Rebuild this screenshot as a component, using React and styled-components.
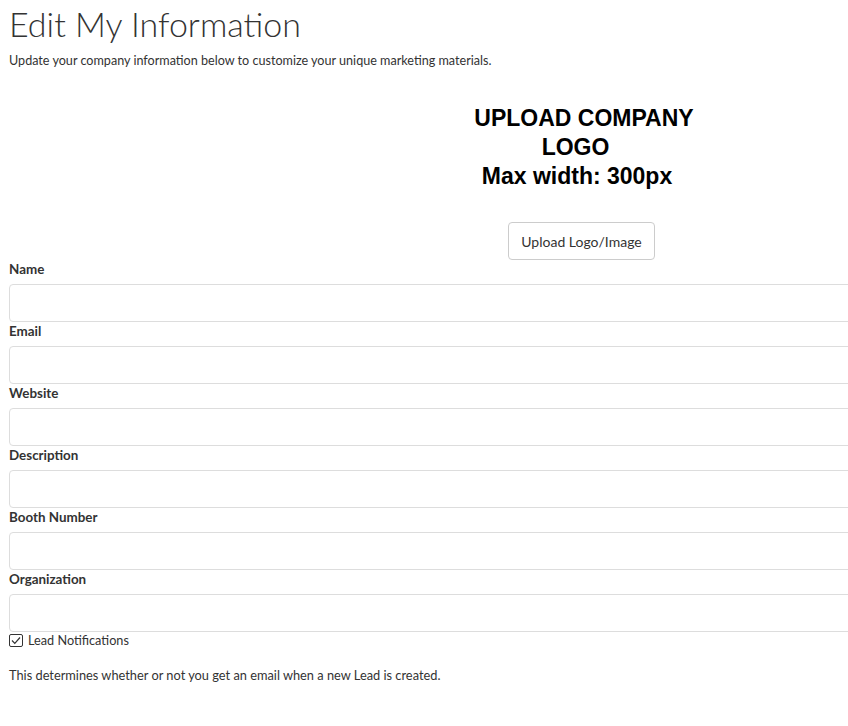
import React from 'react';
import styled, { createGlobalStyle } from 'styled-components';

const GlobalStyle = createGlobalStyle`
  html, body {
    margin: 0;
    padding: 0;
    background: #fff;
    overflow-x: hidden;
  }
  body {
    font-family: Lato, "Open Sans", sans-serif;
    color: #333;
  }
`;

const Page = styled.div`
  width: 900px;
  padding: 0 0 40px 9px;
`;

const Title = styled.h1`
  margin: 0;
  padding-top: 5px;
  font-size: 34px;
  font-weight: 300;
  line-height: 37px;
  color: #333;
`;

const Subtitle = styled.p`
  margin: 10px 0 0;
  font-size: 12.6px;
  line-height: 18px;
`;

const UploadBlock = styled.div`
  width: 300px;
  margin: 34px 0 0 418px;
  display: flex;
  flex-direction: column;
  align-items: center;
`;

const LogoHeading = styled.h3`
  margin: 0;
  font-family: "Liberation Sans", Arial, sans-serif;
  font-size: 23px;
  font-weight: 700;
  line-height: 29px;
  color: #000;
  text-align: center;
`;

const HeadingLine = styled.span`
  display: block;
  padding-left: ${(p) => (p.$shift > 0 ? p.$shift : 0)}px;
  padding-right: ${(p) => (p.$shift < 0 ? -p.$shift : 0)}px;
`;

const UploadButton = styled.button`
  margin-top: 31px;
  margin-left: 9px;
  height: 38px;
  padding: 0 12px;
  background: #fff;
  border: 1px solid #ccc;
  border-radius: 4px;
  font-family: Lato, "Open Sans", sans-serif;
  font-size: 14px;
  color: #333;
`;

const Field = styled.div`
  display: flex;
  flex-direction: column;
`;

const Label = styled.label`
  font-size: 13.4px;
  font-weight: 700;
  line-height: 18px;
  margin-bottom: 6px;
  color: #333;
`;

const Input = styled.input`
  box-sizing: border-box;
  height: 38px;
  width: 100%;
  border: 1px solid #ddd;
  border-radius: 4px;
  padding: 0 10px;
  font-family: inherit;
  font-size: 13px;
`;

const CheckRow = styled.label`
  display: flex;
  align-items: center;
  gap: 5px;
  margin-top: -1px;
  font-size: 12.7px;
  line-height: 18px;
`;

const Box = styled.span`
  box-sizing: border-box;
  width: 14px;
  height: 13px;
  border: 1px solid #333;
  border-radius: 2px;
  display: flex;
  align-items: center;
  justify-content: center;
`;

const Note = styled.p`
  margin: 17px 0 0;
  font-size: 12.8px;
  line-height: 18px;
`;

const fields = ['Name', 'Email', 'Website', 'Description', 'Booth Number', 'Organization'];

export default function App() {
  return (
    <Page>
      <GlobalStyle />
      <Title>Edit My Information</Title>
      <Subtitle>Update your company information below to customize your unique marketing materials.</Subtitle>
      <UploadBlock>
        <LogoHeading>
          <HeadingLine $shift={14}>UPLOAD COMPANY</HeadingLine>
          <HeadingLine $shift={-3}>LOGO</HeadingLine>
          <HeadingLine $shift={0}>Max width: 300px</HeadingLine>
        </LogoHeading>
        <UploadButton type="button">Upload Logo/Image</UploadButton>
      </UploadBlock>
      <div>
        {fields.map((f) => (
          <Field key={f}>
            <Label>{f}</Label>
            <Input type="text" />
          </Field>
        ))}
      </div>
      <CheckRow>
        <Box>
          <svg width="10" height="9" viewBox="0 0 10 9">
            <path d="M1 4.5 L3.8 7.3 L9 1.5" fill="none" stroke="#333" strokeWidth="1.2" />
          </svg>
        </Box>
        Lead Notifications
      </CheckRow>
      <Note>This determines whether or not you get an email when a new Lead is created.</Note>
    </Page>
  );
}
